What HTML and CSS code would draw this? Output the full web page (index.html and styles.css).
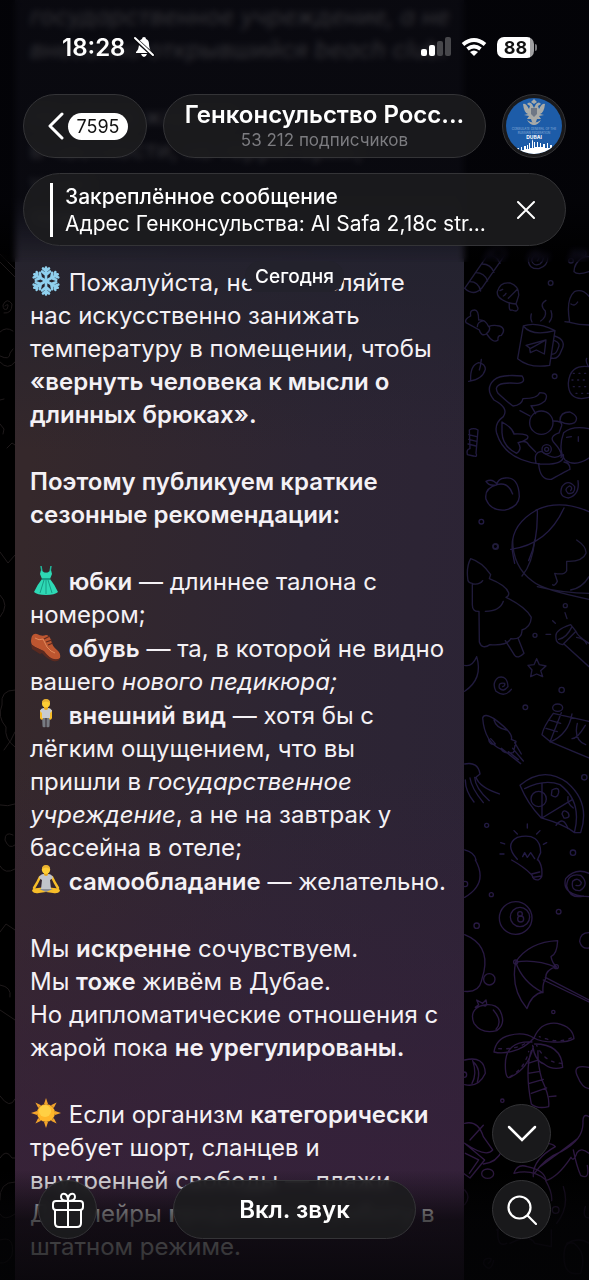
FILE: index.html
```html
<!DOCTYPE html>
<html lang="ru">
<head>
    <meta charset="UTF-8">
    <meta name="viewport" content="width=device-width, initial-scale=1.0">
    <title>Генконсульство России в Дубае</title>
    <link rel="stylesheet" href="styles.css">
</head>
<body>
    <div class="screen">
        <!-- Wallpaper -->
        <svg class="wallpaper" viewBox="0 0 589 1280" preserveAspectRatio="xMaxYMin slice" aria-hidden="true">
            <defs>
                <linearGradient id="ink" gradientUnits="userSpaceOnUse" x1="0" y1="0" x2="0" y2="960">
                    <stop offset="0" stop-color="#1f1b38"/>
                    <stop offset="1" stop-color="#221a44"/>
                </linearGradient>
                <linearGradient id="ink-low" gradientUnits="userSpaceOnUse" x1="0" y1="0" x2="0" y2="1260">
                    <stop offset="0" stop-color="#251942"/>
                    <stop offset=".7" stop-color="#2e1842"/>
                    <stop offset="1" stop-color="#241930"/>
                </linearGradient>
            </defs>
            <!-- candy, fish, mug, cat -->
            <g class="doodle" stroke="url(#ink)" transform="translate(440 240) scale(.3333)">
                <path d="M74 145 L150 35 Q180 10 198 40 L125 145 Q100 170 74 145 M90 125q25 0 32 28 M108 98q25 0 35 25 M127 72q25 0 35 25 M145 45q25 0 35 25"/>
                <path d="M292 62q8-8 3-14q-18-5-20 14q5 18 25 10q18-15 3-32q-30-15-38 18q0 30 32 28q32-10 26-48"/>
                <path d="M402 95q0-25 25-42q12-5 20-3 M402 95q10 12 45 0"/><circle cx="404" cy="40" r="8"/><circle cx="430" cy="40" r="8"/><circle cx="393" cy="62" r="7"/>
                <circle cx="332" cy="129" r="7"/><circle cx="344" cy="409" r="7"/><circle cx="124" cy="845" r="7"/><circle cx="166" cy="919" r="7"/>
                <path d="M172 155q8-30 38-26q28 10 26 38l-8 25q-20 0-40-12q-18-10-16-25 M233 147l-28 28 M208 190q-2 25 8 20q18 8 18-5l-6-14 M180 152l8-4 M190 168q5-2 8-8"/>
                <path d="M116 240q0-30-12-30q-16 0-12 18q-20 10-14 20q22 12 40 22q5 20 22 12q20 30 34 18q-2-14 10-14q16-20-6-28q-20-4-32 2q-10-22-30-20z M112 260q0-15 20-18 M138 282q14-10 10-22"/>
                <path d="M250 258q25 32 95 14 M250 258q40-14 95 14l-16 104q-60 10-96-20z M344 288q38 12 20 44q-10 28-30 22 M344 302q20 8 10 24q-6 18-18 16 M258 316l60-16l-5 42l-24-12l-18 8l-2-14z M318 300l-46 25 M276 246q-6-10-2-24 M302 243q18-12 14-30q-20-20 2-32 M328 246q12-14 5-34"/>
                <path d="M447 255q-30 0-58-8q-12-70 14-92q24-10 44 14 M375 245q10 2 14 0 M393 192q12 8 20-6"/>
                <path d="M92 420q-2-44 24-52q20 4 20 20q-8 30-50 36 M124 358q-2 20-6 32"/>
                <path d="M447 380q-58-8-62 50q0 45 40 46l22-4 M440 355q-4 10 5 24"/><path stroke-dasharray="3 14" d="M400 400h45 M396 420h50 M400 440h45 M408 460h38"/>
                <path d="M190 530q18-26-28-50q-28-34 0-60q20-18 84-12q14 20-14 22q-80-6-58 30q30 28 45 38q26-2 30-22q44 0 50-18q30 0 16 25q-20 16-42 14l14 24 M190 530q-28 20-20 50q25 80 130 92q76 4 70-28 M186 546q32 18 36 36q50-2 40 14q-18 12-28 12q14 18-4 32q-42-20-44-62z M240 512l30 16 M235 608q24-10 32 8l20 20 M288 668q-8-30 16-34q40 30 60 10"/>
                <circle cx="304" cy="548" r="35"/><circle cx="320" cy="628" r="14"/><circle cx="320" cy="628" r="6"/>
                <path d="M340 543q28 0 25 14l-8 22q-30 10-16 28q28 30 22 46 M360 542q0-26 30-26q30 14 14 32q-18 10-44-4 M447 566q-50-10-76 12q-18 50 4 82q30 22 72-6 M296 672q4 50 38 46q50-28 56-30q0-20-18-22 M380 592l14-2 M415 590v14"/>
                <path d="M88 570q12-8 26 0l-6 70q6 12-8 8l-18-4q-4-16 8-18z M86 584l24 6 M86 598l24 6 M84 612l24 6"/>
                <path d="M172 734q-40 10-34 44q14 36 58 32q40-10 42-40q-2-62-44-56q-20 2-24 20q34-10 48 28 M172 734q-14-20-34-10q10 16 34 10"/>
                <path d="M392 752q8-10-4-14q-18 10-4 22q22 4 20-20q-20-24-38 0q-12 30 20 34q34-10 28-52"/>
                <path d="M447 815q-88-38-160-4 M290 810q-90 50-70 140l4 20 M292 812q2 90-26 150 M372 804q-50 110-160 124"/>
            </g>
            <!-- ball, tree, star, pizza, bulb -->
            <g class="doodle" stroke="url(#ink)" transform="translate(440 540) scale(.3333)">
                <path d="M218 0q0 80 60 124q30 26 169 54 M292 140q80 20 155 20 M284 0q-6 70-38 108 M447 110q-20 34-55 40 M410 0q30 20 28 40q-10 26-58 24v28q-6 14-36 8l8 24q-8 16-14 10"/>
                <path d="M92 56q34 10 60 48l-4 12q50 20 58 42q2 10-8 14q60 30 76 60q-2 30-28 38q0 30-34 26q-10 22-62 18q-24 16-32-8l-1-92q-20 2-20-20v-64q-14 0-14-16q-4-34 9-58z M100 132q20 2 28-10 M136 214q44 0 54-30 M196 302l28 44q10 12 28-6l-18-46"/>
                <circle cx="167" cy="20" r="8"/><circle cx="376" cy="197" r="6"/><circle cx="285" cy="286" r="6"/><circle cx="365" cy="450" r="8"/><circle cx="256" cy="502" r="7"/><circle cx="433" cy="712" r="8"/><circle cx="140" cy="856" r="6"/><circle cx="399" cy="938" r="8"/>
                <path d="M348 290q-4-20 44-36l16 20l-40 40q-22-4-20-24 M356 298q24-4 40-38 M408 274q4 14 39 36 M372 312l75 68 M410 292q24 4 30 20 M338 242l8 8 M375 218l6 18 M318 283h14"/>
                <path d="M290 356l8 18l20 4l-16 14l6 18l-18-8l-18 8l4-20l-12-14l18-2z"/>
                <path d="M188 440q8-2 6-10q-20-4-16 14q12 14 26-4q-2-34-28-28q-22 16-8 42q26 20 46-6"/>
                <path d="M110 350q20 66-36 104 M74 376q22 6 36-26"/>
                <path d="M128 534q4-16 34 2q60 44 52 62l14 6l-8 34q-28 4-36-10q-50-20-56-94 M152 596q10 10 14 16q-18 4-20-14 M162 540q6 24 38 30 M184 625l58 46 M205 635l30 24 M218 625l32 38 M224 608l20 34"/>
                <path d="M340 520l107 24 M340 520q-30 40-34 64l26 22q70 30 115 48 M364 518l-34 88 M396 522q-10 60-64 84 M326 540l36 10 M318 565l34 10 M412 550q-12 50 25 64 M436 556q-24 40-40 40"/><ellipse cx="353" cy="503" rx="15" ry="11"/>
                <path d="M74 672q40-8 46 30l-12 10q10 30 70 50 M104 712q2 34 44 70 M90 714q4 30 40 74 M76 720q0 34 26 66"/>
                <path d="M240 736q70-60 142-8q70 60 40 150l-18 0q-30-24-100-44q-40-40-64-98z M254 746q60-30 106-12q66 50 44 140 M306 730v104l92-56"/><circle cx="296" cy="777" r="23"/>
                <path d="M336 750q22-12 20 8q-4 20-22 8z M366 822q4-16 18-4q10 18-12 16z M348 856q22-30 36 10 M384 770q-4 20 16 34"/>
                <path d="M232 958q-40-44 0-66q70-16 70 46l-10 22 M248 950l6-12l8 14l10-14l12 18 M262 852v12 M222 872l10 10 M182 908l12 4 M180 942h12 M300 872l-10 10 M320 908l-10 5 M74 930q30 8 34 30"/>
            </g>
            <!-- umbrella, palm, crocodile -->
            <g class="doodle" stroke="url(#ink-low)" transform="translate(440 860) scale(.3333)">
                <path d="M215 0q36 20 60 44l6 12q16 10 24-6q4-30-10-50 M275 42l24-6 M278 52l26-4 M106 0q40 70-32 112"/>
                <circle cx="75" cy="72" r="8"/><circle cx="154" cy="104" r="6"/><circle cx="110" cy="197" r="8"/><circle cx="356" cy="155" r="7"/><circle cx="340" cy="456" r="5"/><circle cx="187" cy="722" r="5"/>
                <circle cx="227" cy="174" r="49"/><circle cx="240" cy="171" r="29"/><circle cx="240" cy="162" r="7"/><circle cx="242" cy="177" r="9"/>
                <path d="M408 76q14 4 16-8q-10-18-26-4q-6 30 22 28q30-20 2-46q-40-8-42 32q10 40 50 30 M447 40q-40-18-70 16q-14 50 70 54"/>
                <path d="M447 218q-26 0-28 26q6 24 28 20"/>
                <path d="M353 242q-2 40-20 48q4 20 16 30q-34 10-32 36q-10 14-8 40q-34 6-48 50q-50-60-34-140q40-60 126-64 M227 306q60-10 122 16 M227 306q20 60 82 92 M316 352l131 68 M310 360l137 66"/><circle cx="227" cy="306" r="6"/><circle cx="349" cy="320" r="6"/>
                <path d="M74 224q74 30 58 110l-8 30q-8 34-50 30"/><circle cx="148" cy="358" r="17"/>
                <path d="M126 436q-40 14-24 54q24 34 68 22q30-20 10-60q-14-24-54-16 M130 436q14 8 8-16l-10 10l-18-10l6 14l-10 8z M160 450q30 34 8 58"/>
                <path d="M282 534q-30-20-74-8q-40 10-46 50q24 6 54-2q40-10 66-40 M282 534q20-50 70-44q46 10 50 46q-20 12-60 10q-40 0-60-12 M276 546q-80-4-80 68q0 50 18 36q50-24 66-90 M284 552q80 0 84 70q-30 10-56-10q-28-10-34-56 M274 572q-20 60 0 160q18 16 52 8q4-30-20-80q-14-50-12-88 M264 610l32-10 M264 640l36-6 M268 670l42-12 M274 700l46-16 M328 710l20-2"/>
                <path stroke-dasharray="8 16" d="M210 650q44-24 56-76 M176 566q60 4 90-24 M366 610q-50 0-76-54 M394 534q-40 18-96-4"/>
                <path d="M74 600q60-14 62 40q-20 44-62 34 M98 602q14 40-2 68 M100 606q24 20 12 60"/><circle cx="72" cy="644" r="8"/>
                <path d="M447 622q-50-10-36 24q16 40 36 40 M447 770q-20-12-18 20q0 50-64 84q-50 20-80 64 M300 920q70-50 110-82 M318 850q20 0 28 10q-70 40-66 90 M222 940q10-30 40-20q50 10 56 40q-40-34-96-20z M447 880q-24-20-36-2q-10 30-18 14q-40 60-76 70q20 34 18 60 M400 870q10 50 22 76q28 16 20-30"/>
                <path d="M74 790q40-10 56 40l28 40q-20 24-84-20 M74 850l60 50l-44 54l-20-14 M76 880l40 20l-28 40 M90 840l40-44 M130 912q40-4 56-40"/><ellipse cx="143" cy="941" rx="18" ry="14"/>
                <path opacity=".6" d="M370 980q20 60-20 110 M170 1110q50-30 40-60 M200 1150q-30 14-26-40 M210 1150q60-30 74 0l50 10v-50 M436 1040q-10 34 11 34 M74 990q20 20 0 44 M145 1210q10-6 8-14q-24-4-22 16q20 30 30-10 M380 1150q40-20 67 0 M372 1190q0-50 30-40q40 30 20 90q-50 10-50-50"/><circle cx="347" cy="1050" r="10"/>
            </g>
            <!-- left strip -->
            <g class="doodle doodle-warm">
                <path d="M0 262l15 15 M0 254l15 15 M5 306q5-4 2 3q-4 2-4-4q4-8 9-1q0 10-8 9 M0 332q6-6 13-1 M0 356q10 5 10-3l3-4 M0 362q8 9 15 0 M0 400l4-1 M0 424l4 5l-1 5 M7 448l5-5l3 2 M0 552l8 11l7-8 M0 595q10 10 0 22 M15 690q-15 0-13 15q-5 12 4 22q-2 12 9 20 M4 750q8-10 11-18 M0 805q8 2 15-1 M13 835q-8-4-8 5q4 10 10 5 M0 866q5 9 15 3 M0 1096q10 14 15 3 M0 1158q6-10 12 0h3 M0 1200q-1-18 15-18 M0 1214q4 8 15 0 M0 1240q15-5 12 15q-4 9-12 8 M0 932l6-8l9 6 M0 1010l15 10 M0 985q12 2 10 12"/>
            </g>
        </svg>

        <!-- Message -->
        <main class="chat">
            <article class="message">
                <p><i>государственное учреждение, а не<br>внезапно открывшийся beach club.</i></p>
                <p>На улице жаркое<br>в частности, на территории,<br>у нас<br>тоже.</p>
                <p>
                    <svg class="emoji" viewBox="0 0 30 30" role="img" aria-label="снежинка"><g fill="none" stroke="#8fd0ee" stroke-width="2.6" stroke-linecap="round"><g id="arm"><path d="M15 15V1.500M15 9l-4-3.500M15 9l4-3.500M15 5l-3-2.500M15 5l3-2.500"/></g><use href="#arm" transform="rotate(60 15 15)"/><use href="#arm" transform="rotate(120 15 15)"/><use href="#arm" transform="rotate(180 15 15)"/><use href="#arm" transform="rotate(240 15 15)"/><use href="#arm" transform="rotate(300 15 15)"/></g></svg>
                    Пожалуйста, не заставляйте<br>нас искусственно занижать<br>температуру в помещении, чтобы<br><b>«вернуть человека к мысли о<br>длинных брюках».</b>
                </p>
                <p><b>Поэтому публикуем краткие<br>сезонные рекомендации:</b></p>
                <ul class="tips">
                    <li>
                        <svg class="emoji" viewBox="0 0 30 30" role="img" aria-label="платье"><path d="M10 1l1 6 4 2 4-2 1-6" fill="none" stroke="#21b99c" stroke-width="1.500"/><path d="M10 5q4 5 5 2q1 3 5-2l1 4-2 5q5 6 8 13-3 3-12 3T3 27q3-7 8-13l-2-5z" fill="#2ed9b5"/><path d="M13 15L9 28M15 15v14M17 15l4 13" stroke="#169b84" fill="none"/><path d="M11 13h8v2h-8z" fill="#169b84"/></svg>
                        <b>юбки</b> — длиннее талона с<br>номером;
                    </li>
                    <li>
                        <svg class="emoji" viewBox="0 0 30 30" role="img" aria-label="туфля"><path d="M1 4Q3 1 6 2q5 3 9 1 3 0 5 5 1 6 6 10 4 3 3 8-3 3-8 1-5-3-9-8l-8-4-3-2Q-1 9 1 4z" fill="#bd5630"/><path d="M0 12l4 3 9 4q5 7 10 8 4 1 6-1-1 4-7 3-6-2-11-8l-2 1-8-5z" fill="#5b2a20"/><path d="M13 7l6-3M15 10l6-2M17 13l5-2" stroke="#5b2a20" stroke-width="1.200"/><path d="M4 6q4 3 8 1l4 8q4 5 8 6" fill="none" stroke="#e08a5c"/></svg>
                        <b>обувь</b> — та, в которой не видно<br>вашего <i>нового педикюра;</i>
                    </li>
                    <li>
                        <svg class="emoji" viewBox="0 0 30 30" role="img" aria-label="стоящий человек"><path d="M11 16h3.500v12q-3 1-3-1zM15.500 16H19l-.5 11q0 2-3 1z" fill="#777b82"/><path d="M9 11h3v9q-2 2-3-1zM18 11h3v8q-1 3-3 1z" fill="#f6bd29"/><path d="M9 12q1-3 4-3h4q3 0 4 3l-2 2v5h-8v-5z" fill="#c8cbd0"/><path d="M13 7h4v3q-2 2-4 0z" fill="#e5a51c"/><circle cx="15" cy="4.500" r="4" fill="#fdcd35"/><path d="M11 4q0-4 4-4t4 4q-4-3-8 0z" fill="#e9b130"/></svg>
                        <b>внешний вид</b> — хотя бы с<br>лёгким ощущением, что вы<br>пришли в <i>государственное<br>учреждение</i>, а не на завтрак у<br>бассейна в отеле;
                    </li>
                    <li>
                        <svg class="emoji" viewBox="0 0 30 30" role="img" aria-label="человек в позе лотоса"><path d="M9 12L6 18L3 23M21 12l3 6l3 5" fill="none" stroke="#f6bd29" stroke-width="2.500" stroke-linecap="round"/><path d="M1 26q0-3 6-3l8-1 8 1q6 0 6 3-2 3-7 2l-7-1-7 1q-5 1-7-2z" fill="#f6bd29"/><path d="M8 13q1-4 5-4h4q4 0 5 4l-3 2 1 9H10l1-9z" fill="#c1c4ca"/><path d="M8 24h14l-7 3z" fill="#898d94"/><path d="M13 7h4v3q-2 2-4 0z" fill="#e5a51c"/><circle cx="15" cy="4.800" r="4.200" fill="#fdcd35"/><path d="M11 4q0-4 4-4t4 4q-4-3-8 0z" fill="#e9b130"/></svg>
                        <b>самообладание</b> — желательно.
                    </li>
                </ul>
                <p>Мы <b>искренне</b> сочувствуем.<br>Мы <b>тоже</b> живём в Дубае.<br>Но дипломатические отношения с<br>жарой пока <b>не урегулированы.</b></p>
                <p>
                    <svg class="emoji" viewBox="0 0 30 30" role="img" aria-label="солнце"><path id="rays" d="M15 0l2 6h-4zM15 30l2-6h-4zM0 15l6-2v4zM30 15l-6-2v4z" fill="#f2a32c"/><use href="#rays" transform="rotate(45 15 15)"/><circle cx="15" cy="15" r="9" fill="#ffb629"/><circle cx="14" cy="13" r="6" fill="#ffd044"/></svg>
                    Если организм <b>категорически</b><br>требует шорт, сланцев и<br>внутренней свободы — пляжи<br>Джумейры <b>продолжают работу</b> в<br>штатном режиме.
                </p>
            </article>
        </main>

        <!-- Header -->
        <header class="header">
            <div class="status-bar">
                <time>18:28</time>
                <svg class="bell" viewBox="0 0 22 22" width="22" height="22" aria-label="Без звука"><path d="M3 17v-1q3-3 3-8 0-4 3-5 0-2 2-2t2 2q3 1 3 5 0 5 3 8v1zM8 18h6q-1 3-3 3t-3-3z" fill="#fff"/><path d="M1 2l20 18" stroke="#08080c" stroke-width="4"/><path d="M2 2l18 17" stroke="#fff" stroke-width="2" stroke-linecap="round"/></svg>
                <div class="status-icons">
                    <svg viewBox="0 0 30 20" width="30" height="20"><rect y="12" width="6" height="7" rx="2" fill="#fff"/><rect x="8" y="8" width="6" height="11" rx="2" fill="#fff"/><rect x="16" y="4" width="6" height="15" rx="2" fill="#47474b"/><rect x="24" y="0" width="6" height="19" rx="2" fill="#47474b"/></svg>
                    <svg viewBox="0 0 26 20" width="26" height="20" fill="none" stroke="#fff" stroke-width="4"><path d="M2 7.500q11-9 22 0M6.500 12q6.500-5 13 0"/><path d="M13 19l-4-4q4-3 8 0z" fill="#fff" stroke="none"/></svg>
                    <div class="battery">88</div>
                </div>
            </div>
            <div class="nav">
                <button class="glass back" type="button" aria-label="Назад, 7595 непрочитанных">
                    <svg viewBox="0 0 16 28" width="16" height="28"><path d="M14 2L2 14l12 12" fill="none" stroke="#fff" stroke-width="3" stroke-linecap="round" stroke-linejoin="round"/></svg>
                    <span class="unread">7595</span>
                </button>
                <button class="glass title" type="button">
                    <span class="name">Генконсульство Росс...</span>
                    <span class="members">53 212 подписчиков</span>
                </button>
                <button class="glass avatar" type="button" aria-label="Профиль канала">
                    <svg viewBox="0 0 56 56" width="56" height="56">
                        <clipPath id="round"><circle cx="28" cy="28" r="28"/></clipPath>
                        <g clip-path="url(#round)">
                            <rect width="56" height="56" fill="#1d5ca8"/>
                            <g fill="#a9aba8"><path d="M26 6q-3-3-5 0l3 2-1 3q-3-6-6-5 1 9 5 10l-4 1 5 1-2 3h4l1 3 2 2 2-2 1-3h4l-2-3 5-1-4-1q4-1 5-10-3-1-6 5l-1-3 3-2q-2-3-5 0l-2 4z"/><path d="M25 4l3-3 3 3-3 2zM21 22q7 5 14 0-3 5-7 5-4 0-7-5z"/></g>
                            <path d="M25 10h6v6l-3 3-3-3z" fill="#6e7785"/>
                            <text x="28" y="32" class="seal">CONSULATE GENERAL OF THE</text>
                            <text x="28" y="36" class="seal">RUSSIAN FEDERATION</text>
                            <text x="28" y="41" class="seal seal-city">DUBAI</text>
                            <path d="M9 56v-4h2v-2h2v2h2v-3h1v3h2v-4h2v3h1v-4h1v4h1v-6h1v5h2v-7l1-2v9h1v-6h1v5h2v-5h1v5h2v-4h1v4h2v-3h2v4h2v-5h1v5h2v-3h2v4h2v5z" fill="#fff"/>
                        </g>
                    </svg>
                </button>
            </div>
            <section class="glass pinned">
                <div class="pinned-text">
                    <div class="pinned-title">Закреплённое сообщение</div>
                    <div class="pinned-body">Адрес Генконсульства: Al Safa 2,18c str...</div>
                </div>
                <button class="close" type="button" aria-label="Закрыть">
                    <svg viewBox="0 0 18 18" width="18" height="18"><path d="M1 1l16 16M17 1L1 17" stroke="#fff" stroke-width="2" stroke-linecap="round"/></svg>
                </button>
            </section>
            <div class="date">Сегодня</div>
        </header>

        <!-- Bottom controls -->
        <footer class="controls">
            <button class="glass round" type="button" aria-label="Подарок">
                <svg viewBox="0 0 34 36" width="34" height="36" fill="none" stroke="#fff" stroke-width="2" stroke-linejoin="round"><rect x="2" y="9" width="30" height="9" rx="3"/><path d="M4 18v13q0 4 4 4h18q4 0 4-4V18M17 9v26M17 9q-7 0-7-4 0-4 4-3 3 1 3 7zM17 9q7 0 7-4 0-4-4-3-3 1-3 7z"/></svg>
            </button>
            <button class="glass mute" type="button">Вкл. звук</button>
            <div class="stack">
                <button class="glass round" type="button" aria-label="Вниз">
                    <svg viewBox="0 0 30 18" width="30" height="18"><path d="M2 2l13 13L28 2" fill="none" stroke="#fff" stroke-width="2.500" stroke-linecap="round"/></svg>
                </button>
                <button class="glass round" type="button" aria-label="Поиск">
                    <svg viewBox="0 0 30 30" width="30" height="30" fill="none" stroke="#fff" stroke-width="2.200" stroke-linecap="round"><circle cx="12.500" cy="12.500" r="11"/><path d="M21 21l8 8"/></svg>
                </button>
            </div>
        </footer>
    </div>
</body>
</html>
```
FILE: styles.css
```css
/* General Styling */
* {
    box-sizing: border-box;
}

body {
    margin: 0;
    background: #000;
    color: #f4f1f5;
    font-family: Inter, "Noto Sans", sans-serif;
}

button {
    margin: 0;
    padding: 0;
    border: 0;
    background: none;
    color: #fff;
    font: inherit;
}

svg {
    display: block;
    flex: none;
}

.screen {
    position: relative;
    height: 100vh;
    overflow: hidden;
}

/* Wallpaper */
.wallpaper {
    position: absolute;
    inset: 0;
    width: 100%;
    height: 100%;
}

.doodle {
    fill: none;
    stroke-width: 4;
    stroke-linecap: round;
    stroke-linejoin: round;
}

.doodle-warm {
    stroke: #1f1a1b;
    stroke-width: 1;
}

/* Message */
.chat {
    position: relative;
    display: flex;
    flex-direction: column;
    justify-content: flex-end;
    height: 100%;
    padding: 0 125px 0 15px;
}

.message {
    display: flex;
    flex-direction: column;
    gap: 34px;
    padding: 15px 15px 17px;
    background:
        linear-gradient(180deg, #22222e 18%, transparent 36%),
        linear-gradient(0deg, rgba(56, 32, 60, 0.7) 10%, transparent 40%),
        linear-gradient(95deg, #35282b 10%, #2d2533 60%, #2b2335 100%);
    font-size: 24px;
    line-height: 33px;
    white-space: nowrap;
}

.message p {
    margin: 0;
}

.message b {
    font-weight: 600;
}

.tips {
    display: flex;
    flex-direction: column;
    gap: 1px;
    margin: 0;
    padding: 0;
    list-style: none;
}

.emoji {
    display: inline-block;
    width: 32px;
    height: 30px;
    vertical-align: -5px;
}

/* Glass Buttons */
.glass {
    display: flex;
    align-items: center;
    justify-content: center;
    border: 1px solid #343437;
    border-radius: 37px;
    background: rgba(28, 28, 30, 0.9);
    backdrop-filter: blur(4px);
}

/* Header */
.header {
    position: absolute;
    top: 0;
    left: 0;
    right: 0;
    display: flex;
    flex-direction: column;
    padding: 0 23px;
}

.header::before {
    content: "";
    position: absolute;
    inset: 0 0 30px;
    background: linear-gradient(180deg, rgba(4, 4, 9, 0.82) 75%, transparent);
    backdrop-filter: blur(3px);
}

.header > * {
    position: relative;
}

.status-bar {
    display: flex;
    align-items: center;
    height: 94px;
    padding: 0 32px 0 39px;
    font-size: 24px;
    font-weight: 600;
    color: #fff;
}

.bell {
    margin-left: 8px;
}

.status-icons {
    display: flex;
    align-items: center;
    gap: 10px;
    margin-left: auto;
}

.battery {
    position: relative;
    width: 37px;
    height: 21px;
    border-radius: 7px;
    background: linear-gradient(90deg, #fff 88%, #a0a0a2 88%);
    color: #111;
    font-size: 18px;
    font-weight: 700;
    line-height: 21px;
    text-align: center;
}

.battery::after {
    content: "";
    position: absolute;
    top: 7px;
    right: -3px;
    width: 2px;
    height: 7px;
    border-radius: 0 2px 2px 0;
    background: #77777a;
}

.nav {
    display: flex;
    gap: 16px;
}

.back {
    gap: 4px;
    width: 124px;
    height: 64px;
    padding-left: 6px;
}

.unread {
    padding: 0 8px;
    border-radius: 14px;
    background: #fff;
    color: #111;
    font-size: 18px;
    line-height: 27px;
}

.title {
    flex: 1;
    flex-direction: column;
    min-width: 0;
    white-space: nowrap;
}

.name {
    font-size: 24px;
    font-weight: 600;
    line-height: 28px;
}

.members {
    color: #7c7c80;
    font-size: 17px;
    line-height: 22px;
}

.avatar {
    width: 64px;
    height: 64px;
}

.seal {
    fill: #8fb2da;
    font-size: 3px;
    text-anchor: middle;
}

.seal-city {
    fill: #fff;
    font-size: 5px;
    font-weight: 700;
}

.pinned {
    justify-content: space-between;
    height: 73px;
    margin-top: 15px;
    padding: 0 30px 0 26px;
}

.pinned-text {
    padding-left: 12px;
    border-left: 3px solid #fff;
    color: #fff;
    font-size: 21px;
    line-height: 27px;
    white-space: nowrap;
}

.pinned-title {
    font-weight: 500;
}

.date {
    align-self: center;
    margin-top: 15px;
    padding: 0 10px;
    border-radius: 16px;
    background: #23222c;
    color: #fff;
    font-size: 19px;
    font-weight: 500;
    line-height: 31px;
}

/* Bottom Controls */
.controls {
    position: absolute;
    left: 0;
    right: 0;
    bottom: 0;
    display: flex;
    align-items: flex-end;
    gap: 76px;
    padding: 0 38px 41px;
}

.controls::before {
    content: "";
    position: absolute;
    inset: auto 0 0;
    height: 110px;
    background: linear-gradient(180deg, transparent, rgba(4, 4, 6, 0.7) 45%, rgba(4, 4, 6, 0.85));
}

.controls > * {
    position: relative;
}

.round {
    width: 59px;
    height: 59px;
}

.mute {
    flex: 1;
    height: 59px;
    font-size: 24px;
    font-weight: 600;
}

.stack {
    display: flex;
    flex-direction: column;
    gap: 17px;
}
```
